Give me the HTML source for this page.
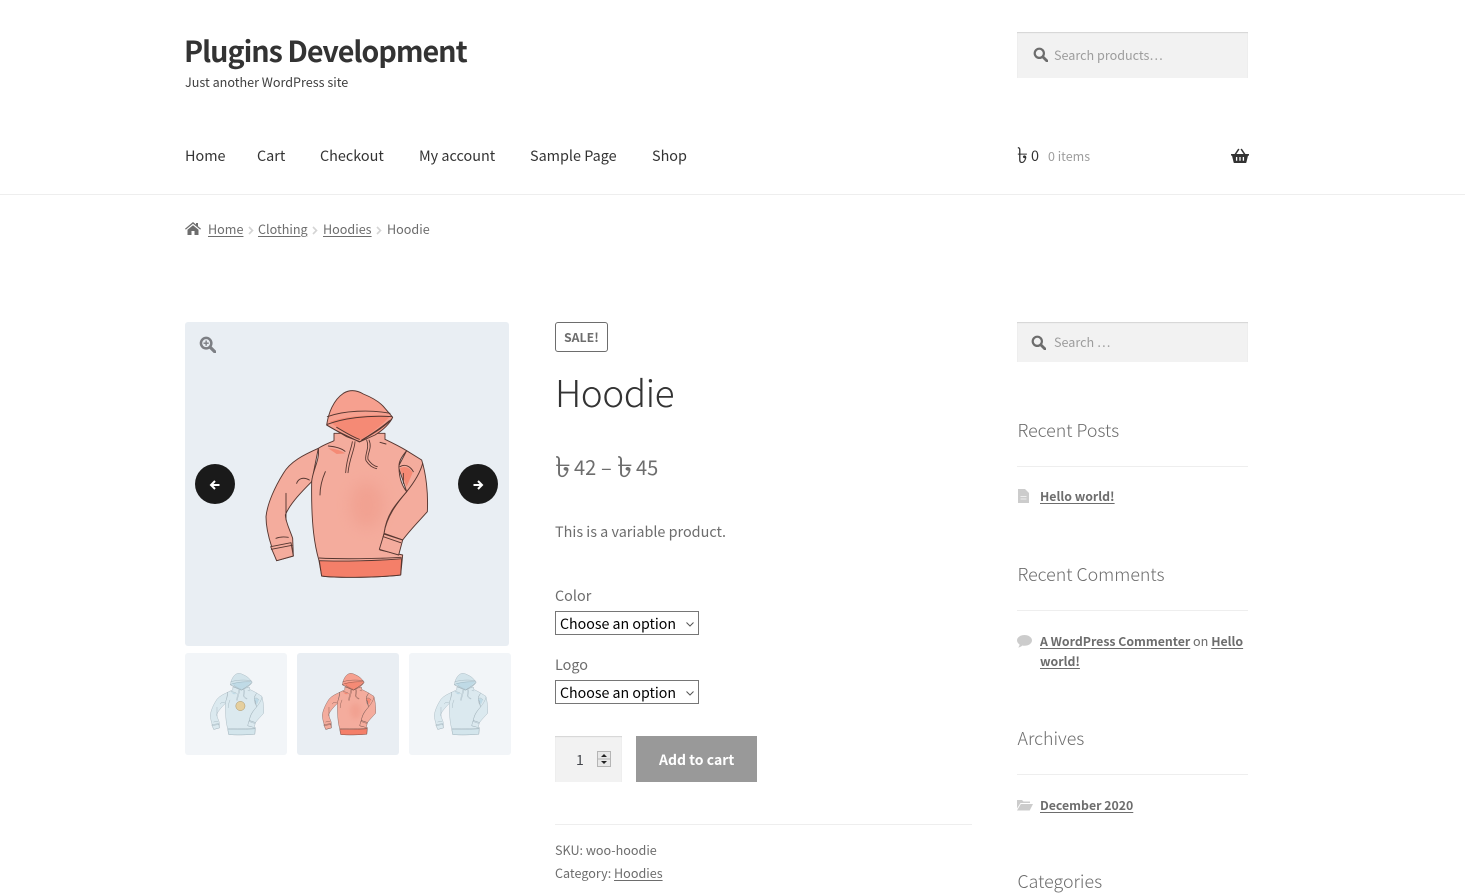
<!DOCTYPE html>
<html lang="en"><head><meta charset="utf-8"><title>Hoodie – Plugins Development</title>
<style>
html,body{margin:0;padding:0;background:#fff}
body{position:relative;width:1465px;height:887px;overflow:hidden;font-family:"Noto Sans CJK SC","Liberation Sans",sans-serif;color:#6d6d6d}
.t{position:absolute;white-space:nowrap;line-height:20px}
a{color:inherit;text-decoration:underline;text-underline-offset:2px}
.n{font-size:14.4px;color:#333;top:146px}
.h{font-size:17.8px;font-weight:300;color:#6d6d6d;left:1017.5px}
.b{font-size:12.3px;font-weight:700}
.r{font-size:12.6px}
.hr{position:absolute;height:1px;background:#eee}
.s{position:absolute;background:#f2f2f2;box-shadow:inset 0 1px 1px rgba(0,0,0,.125)}
.ic{position:absolute;display:block}
select{position:absolute;left:555px;width:144px;height:24px;font:14.2px "Noto Sans CJK SC","Liberation Sans",sans-serif;color:#000;background:#fff;border:1px solid #767676;border-radius:0;padding:2px 0 0 4px;line-height:20px;appearance:none;-webkit-appearance:none}
.thumb{position:absolute;top:653px;width:102px;height:102px;border-radius:3px;background:#e9eef3;overflow:hidden}
.thumb svg{position:absolute;left:-3.4px;top:-3px}
.pale{background:#f2f5f8;--b:#dbe9ef;--h:#d3e4eb;--d:#d3e5ec;--i:#bfdae6;--l:#8b9fa8;--m:transparent}
.coral{--b:#f4ac9d;--h:#f6a08f;--d:#f47f69;--i:#f58a75;--l:#553630;--m:#ee9584}
</style></head><body>

<svg width="0" height="0" style="position:absolute">
<defs>
<filter id="soft" x="-50%" y="-50%" width="200%" height="200%"><feGaussianBlur stdDeviation="22"/></filter>
<g id="hoodie" stroke="var(--l)" stroke-width="2.8" stroke-linejoin="round" stroke-linecap="round">
<path fill="var(--b)" d="M415 385C370 405 330 425 310 460C285 500 262 550 258 590C258 620 265 650 275 680L290 722L340 708L338 655C330 630 318 610 316 585C330 550 370 510 395 485Z"/>
<path fill="var(--b)" d="M680 392L725 420C738 460 745 520 742 575C720 600 690 630 668 660L612 640C620 590 650 550 680 515L655 440Z"/>
<path fill="var(--b)" d="M415 385C430 375 450 368 462 362V340H615V358C640 370 660 380 680 392C665 410 655 425 657 445C658 475 668 500 680 515C650 550 620 580 612 640L600 690L668 705L662 765C600 772 480 775 425 768L417 722C405 680 393 620 395 485C398 450 420 420 415 385Z"/>
<ellipse cx="560" cy="555" rx="50" ry="70" fill="var(--m)" stroke="none" opacity=".45" filter="url(#soft)"/>
<path fill="var(--d)" d="M418 722C480 725 600 722 665 716L662 765C600 772 480 775 425 768Z"/>
<path fill="none" d="M418 714C480 718 600 716 664 712"/>
<path fill="var(--i)" stroke="none" d="M445 385C465 385 485 392 495 400L470 402ZM660 445C675 435 692 445 698 458L680 500C672 480 665 460 660 445Z"/>
<path fill="none" d="M680 515C700 490 720 460 728 430M445 378C465 380 485 385 495 394M600 367L618 372M350 490C355 475 370 470 388 480M660 440C675 430 692 440 700 455M670 460L670 490M436 455C425 480 420 505 420 525M318 520L318 600M288 655C300 650 312 650 325 652"/>
<path fill="var(--h)" d="M440 315C445 280 460 240 490 220C510 208 530 210 550 222C575 232 600 245 615 265L638 292C630 310 610 330 585 345L540 365L500 350Z"/>
<path fill="var(--i)" stroke="none" d="M450 305C490 290 560 282 630 288C612 310 585 332 540 360C510 346 475 328 450 305Z"/>
<path fill="none" d="M442 290C490 272 570 268 630 280M442 313C490 295 560 285 636 290M440 315C470 335 510 350 538 366C570 345 610 325 636 296M470 322C500 340 520 352 538 358M545 360C575 342 605 322 628 302"/>
<path fill="none" stroke-width="2.600" d="M517 365C515 385 500 410 497 458M525 365C524 390 508 415 504 458M560 360C570 385 552 405 558 422C566 434 578 444 590 446M567 360C578 385 560 402 564 418C572 430 582 438 592 440"/>
<path fill="var(--b)" d="M272 680L333 668L340 708L290 722Z"/>
<path fill="none" d="M274 688L336 676"/>
<path fill="var(--b)" d="M612 642L668 660L656 705L598 688Z"/>
<path fill="none" d="M610 650L662 668"/>
</g>
<g id="mag" fill="none" stroke="currentColor"><circle cx="6.3" cy="6.3" r="4.6" stroke-width="2.2"/><path d="M10 10l4 4" stroke-width="2.8" stroke-linecap="round"/></g>
<path id="sep" d="M1 1l3.500 3.500L1 8" fill="none" stroke="#d4d4d4" stroke-width="1.600"/>
<path id="chev" d="M.5 .5L4 4l3.500-3.500" fill="none" stroke="#555" stroke-width="1"/>
</defs>
</svg>

<div class="t" style="left:184px;top:38px;font-size:28.7px;font-weight:700;color:#333;letter-spacing:-1px;line-height:26px">Plugins Development</div>
<div class="t" style="left:185px;top:72px;font-size:12.6px;color:#404040">Just another WordPress site</div>

<div class="s" style="left:1017px;top:32px;width:231px;height:46px"></div>
<svg class="ic" style="left:1033px;top:47px;color:#6d6d6d" width="15" height="15" viewBox="0 0 15 15"><use href="#mag"/></svg>
<div class="t" style="left:1054px;top:45px;font-size:12.6px;color:#9d9d9d">Search products…</div>

<div class="t n" style="left:185px">Home</div>
<div class="t n" style="left:257px">Cart</div>
<div class="t n" style="left:320px">Checkout</div>
<div class="t n" style="left:419px">My account</div>
<div class="t n" style="left:530px">Sample Page</div>
<div class="t n" style="left:652px">Shop</div>

<div class="t" style="left:1017px;top:144px;font-size:22px;color:#333">৳</div>
<div class="t" style="left:1031px;top:146px;font-size:14.4px;color:#333">0</div>
<div class="t" style="left:1048px;top:146px;font-size:12.5px;color:#9d9d9d">0 items</div>
<svg class="ic" style="left:1231px;top:148px" width="18" height="15" viewBox="0 0 18 15"><path fill="#333" d="M0 6h3.600L7.200.6l1.300.8L5.400 6h7.200L9.500 1.400l1.300-.8L14.400 6H18v1.600h-1L15.400 14.400a.8.8 0 0 1-.8.6H3.400a.8.8 0 0 1-.8-.6L1 7.600H0z"/><path stroke="#fff" stroke-width="1.300" d="M5.600 9v3.800M9 9v3.800M12.400 9v3.800"/></svg>

<div class="hr" style="left:0;top:194px;width:1465px"></div>

<svg class="ic" style="left:185px;top:222px" width="16" height="13" viewBox="0 0 16 13"><path fill="#6d6d6d" d="M8 0l3 2.500V1h2v3.200L16 6.700l-.8.900L8 1.700.8 7.600 0 6.700zM2.500 7.800L8 3.200l5.500 4.600V13H9.500V9h-3v4h-4z"/></svg>
<div class="t" style="left:208px;top:219px;font-size:12.6px"><a>Home</a></div>
<svg class="ic" style="left:248px;top:226px" width="6" height="9"><use href="#sep"/></svg>
<div class="t" style="left:258px;top:219px;font-size:12.6px"><a>Clothing</a></div>
<svg class="ic" style="left:312px;top:226px" width="6" height="9"><use href="#sep"/></svg>
<div class="t" style="left:323px;top:219px;font-size:12.6px"><a>Hoodies</a></div>
<svg class="ic" style="left:376px;top:226px" width="6" height="9"><use href="#sep"/></svg>
<div class="t" style="left:387px;top:219px;font-size:12.6px">Hoodie</div>

<div style="position:absolute;left:185px;top:322px;width:324px;height:324px;background:#e9eef3;border-radius:3px"></div>
<svg class="ic coral" style="left:180px;top:320px" width="335" height="330" viewBox="0 0 1005 990"><use href="#hoodie"/></svg>
<svg class="ic" style="left:199px;top:336px;color:#7d7f84" width="17" height="17" viewBox="0 0 15 15"><use href="#mag"/><path d="M4 6.300h4.600M6.300 4v4.600" stroke="#7d7f84" stroke-width="1.200"/></svg>
<div style="position:absolute;left:195px;top:464px;width:40px;height:40px;border-radius:50%;background:#1a1a1a"></div>
<svg class="ic" style="left:209px;top:479px" width="12" height="12" viewBox="0 0 12 12"><path d="M10.500 6H2M6 2L2 6l4 4" fill="none" stroke="#fff" stroke-width="2"/></svg>
<div style="position:absolute;left:458px;top:464px;width:40px;height:40px;border-radius:50%;background:#1a1a1a"></div>
<svg class="ic" style="left:472px;top:479px" width="12" height="12" viewBox="0 0 12 12"><path d="M1.500 6H10M6 2l4 4-4 4" fill="none" stroke="#fff" stroke-width="2"/></svg>

<div class="thumb pale" style="left:185px"><svg width="110" height="110" viewBox="0 0 1000 1000"><use href="#hoodie"/><circle cx="531" cy="509" r="42" fill="#e5cf9e" stroke="#a08a5a" stroke-width="4"/></svg></div>
<div class="thumb coral" style="left:297px"><svg width="110" height="110" viewBox="0 0 1000 1000"><use href="#hoodie"/></svg></div>
<div class="thumb pale" style="left:409px"><svg width="110" height="110" viewBox="0 0 1000 1000"><use href="#hoodie"/></svg></div>

<div style="position:absolute;left:555px;top:322px;width:51px;height:28px;border:1px solid #6d6d6d;border-radius:3px"></div>
<div class="t" style="left:564px;top:327px;font-size:12.3px;font-weight:700">SALE!</div>
<div class="t" style="left:555px;top:377px;font-size:37px;font-weight:300;color:#333;line-height:28px;letter-spacing:-.5px">Hoodie</div>
<div class="t" style="left:555px;top:455px;font-size:29px;transform:scaleX(1.1);transform-origin:0 50%">৳</div>
<div class="t" style="left:574px;top:457px;font-size:20px">42</div>
<div class="t" style="left:601px;top:457px;font-size:20px">–</div>
<div class="t" style="left:617px;top:455px;font-size:29px;transform:scaleX(1.1);transform-origin:0 50%">৳</div>
<div class="t" style="left:636px;top:457px;font-size:20px">45</div>
<div class="t" style="left:555px;top:522px;font-size:14.4px">This is a variable product.</div>

<div class="t" style="left:555px;top:586px;font-size:14.4px">Color</div>
<select style="top:611px"><option>Choose an option</option></select>
<svg class="ic" style="left:686px;top:622px" width="8" height="5"><use href="#chev"/></svg>
<div class="t" style="left:555px;top:655px;font-size:14.4px">Logo</div>
<select style="top:680px"><option>Choose an option</option></select>
<svg class="ic" style="left:686px;top:691px" width="8" height="5"><use href="#chev"/></svg>

<div class="s" style="left:555px;top:736px;width:67px;height:46px"></div>
<div class="t" style="left:576px;top:750px;font-size:14px;color:#43454b">1</div>
<svg class="ic" style="left:597px;top:751px" width="14" height="16" viewBox="0 0 14 16"><rect x=".5" y=".5" width="13" height="15" fill="#e8e8e8" stroke="#b5b5b5"/><path d="M.5 8h13" stroke="#b5b5b5"/><path d="M7 3l3 3H4zM7 13l3-3H4z" fill="#222"/></svg>
<div style="position:absolute;left:636px;top:736px;width:121px;height:46px;background:#999"></div>
<div class="t" style="left:659px;top:750px;font-size:14px;font-weight:700;color:#fff">Add to cart</div>

<div class="hr" style="left:555px;top:824px;width:417px"></div>
<div class="t" style="left:555px;top:840px;font-size:12.6px">SKU: woo-hoodie</div>
<div class="t" style="left:555px;top:863px;font-size:12.6px">Category: <a style="font-weight:400">Hoodies</a></div>

<div class="s" style="left:1017px;top:322px;width:231px;height:40px"></div>
<svg class="ic" style="left:1031px;top:335px;color:#6d6d6d" width="15" height="15" viewBox="0 0 15 15"><use href="#mag"/></svg>
<div class="t" style="left:1054px;top:332px;font-size:12.6px;color:#9d9d9d">Search …</div>

<div class="t h" style="top:420px">Recent Posts</div>
<div class="hr" style="left:1017px;top:466px;width:231px"></div>
<svg class="ic" style="left:1018px;top:489px" width="11" height="14" viewBox="0 0 11 14"><path fill="#ccc" d="M0 0h7l4 4v10H0z"/><path d="M2.500 7.500h6M2.500 10h6" stroke="#eee"/></svg>
<div class="t b" style="left:1040px;top:486px"><a>Hello world!</a></div>

<div class="t h" style="top:564px">Recent Comments</div>
<div class="hr" style="left:1017px;top:610px;width:231px"></div>
<svg class="ic" style="left:1017px;top:635px" width="15" height="13" viewBox="0 0 15 13"><path fill="#ccc" d="M7.500 0C11.600 0 15 2.400 15 5.400S11.600 10.800 7.500 10.800c-.8 0-1.500-.1-2.200-.3C4.300 11.500 3 12.200 1.200 12.500c.8-.9 1.300-1.900 1.400-3C1 8.500 0 7 0 5.400 0 2.400 3.400 0 7.500 0z"/></svg>
<div class="t r" style="left:1040px;top:631px"><a class="b">A WordPress Commenter</a> on <a class="b">Hello</a></div>
<div class="t b" style="left:1040px;top:651px"><a>world!</a></div>

<div class="t h" style="top:728px">Archives</div>
<div class="hr" style="left:1017px;top:774px;width:231px"></div>
<svg class="ic" style="left:1017px;top:799px" width="16" height="12" viewBox="0 0 16 12"><path fill="#ccc" d="M0 1h5l1.500 1.500H13V4H3.500L0 9.500zM3.800 5H16l-3.300 6.500H0z"/></svg>
<div class="t b" style="left:1040px;top:795px"><a>December 2020</a></div>

<div class="t h" style="top:871px">Categories</div>
</body></html>
